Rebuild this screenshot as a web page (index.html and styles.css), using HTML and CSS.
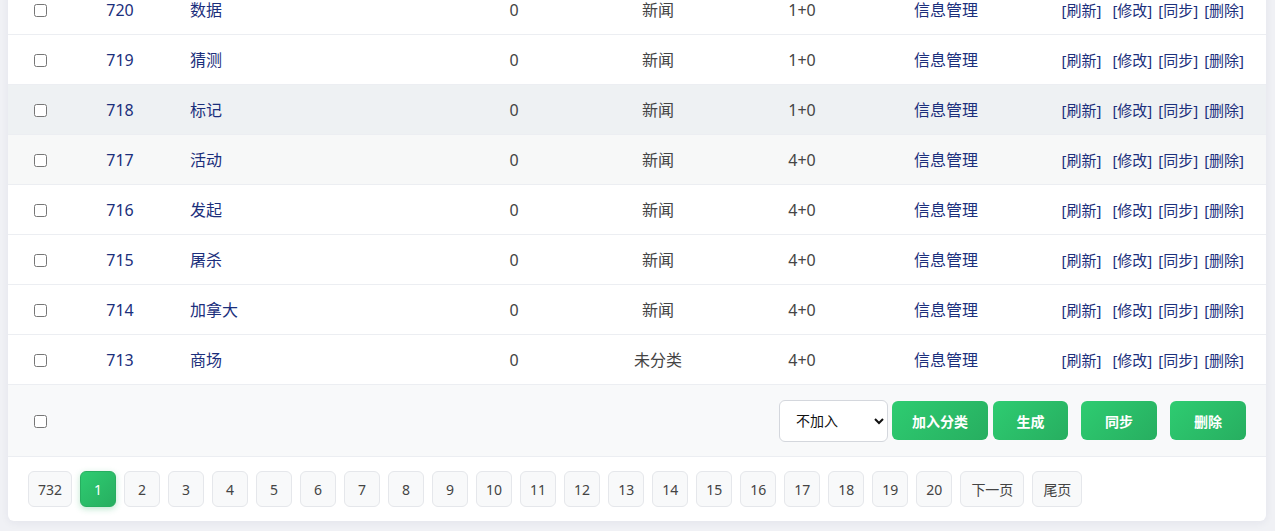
FILE: index.html
```html
<!DOCTYPE html>
<html lang="zh-CN">
<head>
<meta charset="utf-8">
<title>信息列表</title>
<link rel="stylesheet" href="styles.css">
</head>
<body>
<div class="card">
  <table class="list">
    <colgroup>
      <col class="c-check"><col class="c-id"><col class="c-title"><col class="c-num"><col class="c-num"><col class="c-num"><col class="c-num"><col class="c-act">
    </colgroup>
    <tbody>
      <tr><td class="chk"><input type="checkbox"></td><td class="id">720</td><td class="title">数据</td><td class="mid">0</td><td class="mid">新闻</td><td class="mid">1+0</td><td class="mid link">信息管理</td><td class="act"><a>[刷新]</a><a class="wide">[修改]</a><a>[同步]</a><a>[删除]</a></td></tr>
      <tr><td class="chk"><input type="checkbox"></td><td class="id">719</td><td class="title">猜测</td><td class="mid">0</td><td class="mid">新闻</td><td class="mid">1+0</td><td class="mid link">信息管理</td><td class="act"><a>[刷新]</a><a class="wide">[修改]</a><a>[同步]</a><a>[删除]</a></td></tr>
      <tr class="hover"><td class="chk"><input type="checkbox"></td><td class="id">718</td><td class="title">标记</td><td class="mid">0</td><td class="mid">新闻</td><td class="mid">1+0</td><td class="mid link">信息管理</td><td class="act"><a>[刷新]</a><a class="wide">[修改]</a><a>[同步]</a><a>[删除]</a></td></tr>
      <tr class="soft"><td class="chk"><input type="checkbox"></td><td class="id">717</td><td class="title">活动</td><td class="mid">0</td><td class="mid">新闻</td><td class="mid">4+0</td><td class="mid link">信息管理</td><td class="act"><a>[刷新]</a><a class="wide">[修改]</a><a>[同步]</a><a>[删除]</a></td></tr>
      <tr><td class="chk"><input type="checkbox"></td><td class="id">716</td><td class="title">发起</td><td class="mid">0</td><td class="mid">新闻</td><td class="mid">4+0</td><td class="mid link">信息管理</td><td class="act"><a>[刷新]</a><a class="wide">[修改]</a><a>[同步]</a><a>[删除]</a></td></tr>
      <tr><td class="chk"><input type="checkbox"></td><td class="id">715</td><td class="title">屠杀</td><td class="mid">0</td><td class="mid">新闻</td><td class="mid">4+0</td><td class="mid link">信息管理</td><td class="act"><a>[刷新]</a><a class="wide">[修改]</a><a>[同步]</a><a>[删除]</a></td></tr>
      <tr><td class="chk"><input type="checkbox"></td><td class="id">714</td><td class="title">加拿大</td><td class="mid">0</td><td class="mid">新闻</td><td class="mid">4+0</td><td class="mid link">信息管理</td><td class="act"><a>[刷新]</a><a class="wide">[修改]</a><a>[同步]</a><a>[删除]</a></td></tr>
      <tr><td class="chk"><input type="checkbox"></td><td class="id">713</td><td class="title">商场</td><td class="mid">0</td><td class="mid">未分类</td><td class="mid">4+0</td><td class="mid link">信息管理</td><td class="act"><a>[刷新]</a><a class="wide">[修改]</a><a>[同步]</a><a>[删除]</a></td></tr>
    </tbody>
  </table>

  <div class="bulk">
    <div class="bulk-check"><input type="checkbox"></div>
    <div class="bulk-tools">
      <select class="sel"><option>不加入</option><option>新闻</option><option>未分类</option></select>
      <button class="btn b-first">加入分类</button>
      <button class="btn b-near">生成</button>
      <button class="btn b-far">同步</button>
      <button class="btn b-far">删除</button>
    </div>
  </div>

  <div class="pager">
    <a class="pg">732</a>
    <a class="pg on">1</a>
    <a class="pg">2</a>
    <a class="pg">3</a>
    <a class="pg">4</a>
    <a class="pg">5</a>
    <a class="pg">6</a>
    <a class="pg">7</a>
    <a class="pg">8</a>
    <a class="pg">9</a>
    <a class="pg">10</a>
    <a class="pg">11</a>
    <a class="pg">12</a>
    <a class="pg">13</a>
    <a class="pg">14</a>
    <a class="pg">15</a>
    <a class="pg">16</a>
    <a class="pg">17</a>
    <a class="pg">18</a>
    <a class="pg">19</a>
    <a class="pg">20</a>
    <a class="pg txt">下一页</a>
    <a class="pg txt">尾页</a>
  </div>
</div>
</body>
</html>
```

FILE: styles.css
```css
html, body {
  margin: 0;
  padding: 0;
  background: #f0f1f5;
}
body {
  font-family: "Noto Sans", "Noto Sans CJK SC", sans-serif;
  font-size: 16px;
  color: #444;
  overflow: hidden;
}
.card {
  width: 1258px;
  margin: -15px 0 10px 8px;
  background: #fff;
  border-radius: 0 0 6px 6px;
  box-shadow: 0 2px 8px rgba(30, 40, 80, 0.06);
}
.list {
  width: 1258px;
  border-collapse: collapse;
  table-layout: fixed;
}
.c-check { width: 64px; }
.c-id { width: 96px; }
.c-title { width: 274px; }
.c-num { width: 144px; }
.c-act { width: 248px; }

.list td {
  height: 49px;
  padding: 0;
  border-bottom: 1px solid #eceef2;
  vertical-align: middle;
  white-space: nowrap;
  line-height: 20px;
}
.list tr.hover td { background: #eef1f3; }
.list tr.soft td { background: #f7f8f8; }

.chk { text-align: center; }
.chk input, .bulk-check input {
  width: 13px;
  height: 13px;
  margin: 0;
  vertical-align: middle;
}
.chk input { position: relative; top: -1px; }
.id { text-align: center; color: #1b2f7c; }
.title { padding-left: 22px !important; color: #1b2f7c; }
.mid { text-align: center; color: #444; }
.mid.link { color: #1b2f7c; }
.act {
  text-align: right;
  padding-right: 22px !important;
  color: #1b2f7c;
  font-size: 15px;
}
.act a { margin-left: 6px; }
.act a.wide { margin-left: 11px; }

.bulk {
  display: flex;
  align-items: center;
  height: 71px;
  background: #f8f9fa;
  border-bottom: 1px solid #eceef2;
}
.bulk-check {
  width: 64px;
  text-align: center;
  padding-bottom: 2px;
}
.bulk-tools {
  margin-left: auto;
  padding-right: 20px;
  display: flex;
  align-items: center;
}
.sel {
  width: 109px;
  height: 42px;
  border: 1px solid #d4d7dd;
  border-radius: 6px;
  background: #fff;
  padding: 0 8px 0 12px;
  font-family: "Noto Sans", "Noto Sans CJK SC", sans-serif;
  font-size: 14px;
  color: #111;
  margin-right: 4px;
}
.btn {
  height: 39px;
  min-width: 75px;
  padding: 0 20px;
  border: 0;
  border-radius: 6px;
  background: linear-gradient(135deg, #2ecc71, #27ae60);
  color: #fff;
  font-family: "Noto Sans", "Noto Sans CJK SC", sans-serif;
  font-size: 14px;
  font-weight: 700;
}
.b-near { margin-left: 5px; }
.b-far { margin-left: 13px; min-width: 76px; }

.pager {
  display: flex;
  gap: 8px;
  padding: 14px 20px;
}
.pg {
  box-sizing: border-box;
  min-width: 36px;
  height: 36px;
  padding: 0 9px;
  display: flex;
  align-items: center;
  justify-content: center;
  background: #f8f9fa;
  border: 1px solid #e5e7eb;
  border-radius: 6px;
  color: #444;
  font-size: 14px;
}
.pg.txt { padding: 0 10px; }
.pg.on {
  background: linear-gradient(135deg, #2ecc71, #27ae60);
  border-color: #27ae60;
  color: #fff;
  box-shadow: 0 2px 6px rgba(39, 174, 96, 0.3);
}
```
